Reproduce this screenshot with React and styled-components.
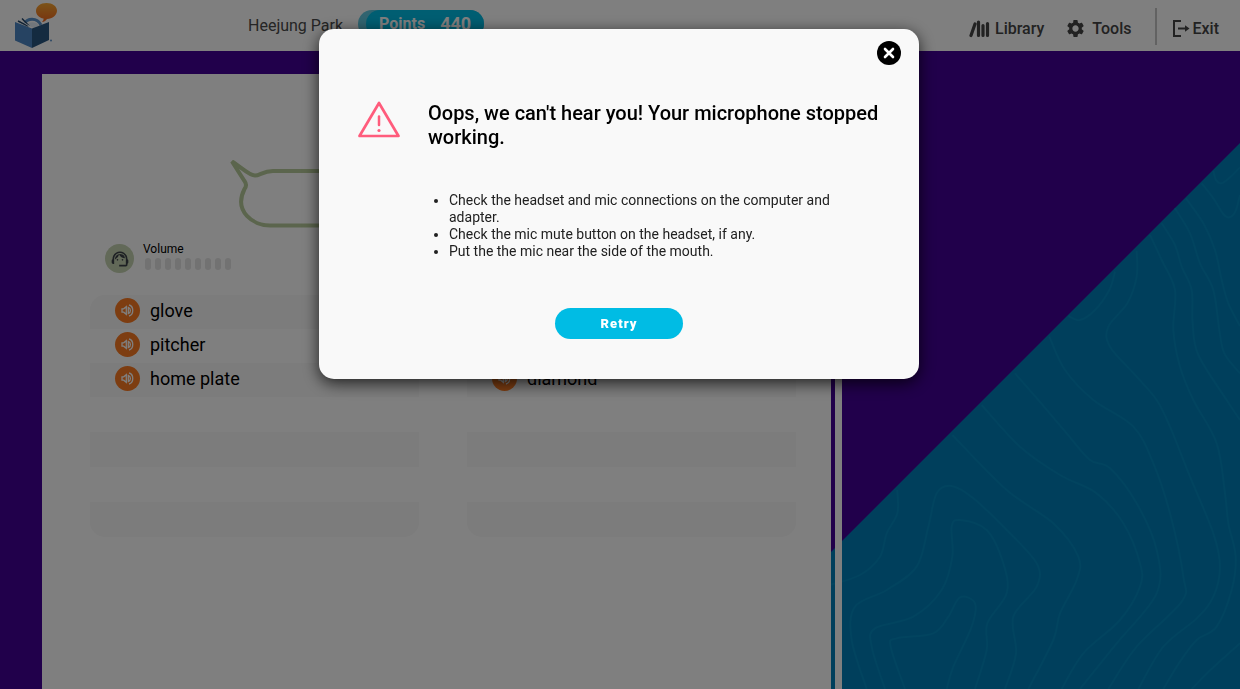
import styled, { createGlobalStyle } from 'styled-components'
import { MdSettings, MdSupportAgent } from 'react-icons/md'

const GlobalStyle = createGlobalStyle`
  * {
    box-sizing: border-box;
  }
  body {
    margin: 0;
    font-family: Roboto, sans-serif;
    background-color: #420096;
  }
`

const Page = styled.div`
  display: flex;
  flex-direction: column;
  min-height: 100vh;
  position: relative;
  overflow: hidden;
`

const Header = styled.header`
  display: flex;
  align-items: center;
  justify-content: space-between;
  height: 51px;
  padding: 0 21px 0 14px;
  background-color: #fff;
  color: #4a4a4a;
`

const HeaderGroup = styled.div`
  display: flex;
  align-items: center;
`

const Logo = styled.svg`
  width: 46px;
  height: 48px;
  margin: 0 188px 2px 0;
`

const UserName = styled.span`
  font-size: 16px;
  margin-right: 15px;
`

const PointsBadge = styled.div`
  height: 28px;
  margin-bottom: 4px;
  padding-left: 8px;
  border-radius: 14px;
  background-color: #63c9e0;
`

const PointsInner = styled.div`
  display: flex;
  align-items: center;
  gap: 15px;
  height: 28px;
  padding: 0 13px;
  border-radius: 14px;
  background-color: #00bce4;
  color: #fff;
  font-size: 16px;
  font-weight: 700;
`

const Score = styled.span`
  font-size: 18px;
`

const NavButton = styled.button`
  display: flex;
  align-items: center;
  gap: ${({ $gap }) => $gap || 5}px;
  padding: 6px 0 0;
  border: none;
  background: none;
  color: #444;
  font-family: inherit;
  font-size: 16px;
  font-weight: 500;
  margin-left: ${({ $space }) => $space || 0}px;
`

const Divider = styled.div`
  width: 2px;
  height: 37px;
  margin: 2px 15px 0 23px;
  background-color: #c4c4c4;
`

const Stage = styled.main`
  flex: 1;
  display: grid;
  grid-template-columns: minmax(0, 1fr) 7px 398px;
  column-gap: 4px;
  padding: 23px 0 0 42px;
  margin-right: -4px;
`

const Backdrop = styled.svg`
  position: absolute;
  right: 0;
  bottom: 0;
  width: 420px;
  height: 559px;
`

const Sheet = styled.section`
  position: relative;
  padding: 86px 35px 40px 48px;
  background-color: #fff;
`

const PageEdge = styled.div`
  position: relative;
  background-color: #fff;
`

const Bubble = styled.svg`
  display: block;
  width: 420px;
  height: 68px;
  margin-left: 140px;
`

const Volume = styled.div`
  display: flex;
  gap: 9px;
  margin: 13px 0 22px 15px;
`

const Avatar = styled.div`
  display: flex;
  align-items: center;
  justify-content: center;
  width: 29px;
  height: 29px;
  margin-top: 3px;
  border-radius: 50%;
  background-color: #c4d2b0;
  color: #3c4248;
`

const VolumeLabel = styled.div`
  font-size: 12px;
  line-height: 16px;
`

const Bars = styled.div`
  display: flex;
  gap: 4px;
  padding: 1px 2px 2px;
`

const Bar = styled.span`
  width: 6px;
  height: 12px;
  border-radius: 3px;
  background-color: #e4e4e4;
`

const Columns = styled.div`
  display: grid;
  grid-template-columns: 1fr 1fr;
  gap: 48px;
`

const WordList = styled.ul`
  margin: 0;
  padding: 0;
  list-style: none;
  border-radius: 15px;
  overflow: hidden;
`

const WordRow = styled.li`
  display: flex;
  align-items: center;
  gap: 10px;
  height: ${({ $tall }) => ($tall ? 35 : 34)}px;
  padding: 0 0 3px 25px;
  font-size: 18px;

  &:nth-child(odd) {
    background-color: #f8f8f8;
  }
`

const SpeakButton = styled.button`
  display: flex;
  align-items: center;
  justify-content: center;
  width: 25px;
  height: 25px;
  padding: 0;
  border: none;
  border-radius: 50%;
  background-color: #fb7b23;
`

const Overlay = styled.div`
  position: fixed;
  inset: 0;
  display: flex;
  justify-content: center;
  align-items: flex-start;
  padding: 29px 2px 0 0;
  background-color: rgba(0, 0, 0, 0.5);
`

const Modal = styled.div`
  display: flex;
  flex-direction: column;
  width: 600px;
  max-width: 100%;
  padding: 12px 18px 40px 39px;
  border-radius: 15px;
  background-color: #f9f9f9;
  box-shadow: 0 4px 16px rgba(0, 0, 0, 0.75);
`

const CloseButton = styled.button`
  align-self: flex-end;
  display: flex;
  width: 24px;
  height: 24px;
  padding: 0;
  border: none;
  background: none;
`

const Message = styled.div`
  display: flex;
  gap: 28px;
  margin-top: 36px;

  & svg {
    flex-shrink: 0;
  }
`

const Title = styled.h2`
  margin: 0;
  font-size: 20px;
  line-height: 24px;
  font-weight: 500;
  color: #000;
`

const Tips = styled.ul`
  margin: 43px 60px 48px 71px;
  padding-left: 20px;
  font-size: 14px;
  line-height: 17px;
  color: #212121;
`

const RetryButton = styled.button`
  align-self: center;
  width: 128px;
  height: 31px;
  margin-right: 21px;
  border: none;
  border-radius: 16px;
  background-color: #00bce4;
  color: #fff;
  font-family: inherit;
  font-size: 13px;
  font-weight: 900;
  letter-spacing: 1px;
`

// contour lines of the map, as points the curve runs through
const contours = [
  [[1180, 122], [1188, 150], [1205, 160], [1230, 142], [1260, 112]],
  [[1145, 160], [1180, 205], [1210, 252], [1228, 262], [1246, 245], [1260, 195]],
  [[1098, 205], [1150, 280], [1185, 360], [1205, 450], [1225, 520], [1260, 588]],
  [[1065, 235], [1110, 310], [1140, 400], [1180, 480], [1198, 600], [1213, 670], [1260, 730]],
  [[1025, 280], [1065, 345], [1085, 410], [1115, 480], [1118, 580], [1135, 675], [1220, 810], [1260, 870]],
  [[990, 315], [1025, 390], [1065, 480], [1060, 600], [1080, 710], [1120, 810], [1190, 940], [1215, 1090], [1225, 1180], [1247, 1280], [1235, 1380], [1190, 1490], [1130, 1530], [1080, 1595], [1030, 1677]],
  [[950, 362], [950, 440], [922, 520], [865, 590], [870, 650], [950, 740], [1010, 810], [1050, 890], [1110, 1040], [1180, 1210], [1200, 1310], [1180, 1400], [1130, 1465], [1030, 1550], [955, 1677]],
  [[885, 425], [868, 480], [825, 540], [780, 570], [745, 558]],
  [[688, 620], [735, 720], [820, 810], [940, 890], [1000, 1000], [1050, 1150], [1090, 1340], [1085, 1415], [950, 1550], [865, 1677]],
  [[585, 730], [655, 810], [740, 910], [810, 990], [870, 1015], [950, 1120], [1010, 1260], [1010, 1390], [890, 1540], [780, 1677]],
  [[485, 825], [600, 950], [720, 1035], [830, 1090], [910, 1180], [960, 1300], [960, 1370], [900, 1470], [790, 1570], [725, 1677]],
  [[397, 915], [560, 1080], [700, 1180], [775, 1280], [770, 1350], [720, 1450], [700, 1530], [625, 1677]],
  [[232, 1080], [232, 1150], [200, 1210], [180, 1280], [120, 1335], [30, 1365]],
  [[140, 1677], [95, 1530], [105, 1430], [200, 1380], [290, 1310], [325, 1190], [350, 1090], [395, 1068], [460, 1105], [560, 1200], [650, 1300], [650, 1370], [580, 1460], [588, 1570], [555, 1677]],
  [[195, 1677], [155, 1550], [165, 1495], [280, 1460], [365, 1380], [397, 1280], [395, 1190], [420, 1170], [500, 1200], [550, 1300], [560, 1390], [502, 1480], [500, 1560], [465, 1677]],
  [[255, 1677], [212, 1550], [230, 1525], [340, 1510], [385, 1460], [420, 1402], [465, 1420], [455, 1490], [400, 1610], [380, 1677]],
  [[1115, 1677], [1180, 1612], [1260, 1540]],
]

function smoothPath(points) {
  let d = `M${points[0][0]} ${points[0][1]}`
  for (let i = 0; i < points.length - 1; i++) {
    const before = points[i - 1] || points[i]
    const from = points[i]
    const to = points[i + 1]
    const after = points[i + 2] || to
    const c1 = [from[0] + (to[0] - before[0]) / 6, from[1] + (to[1] - before[1]) / 6]
    const c2 = [to[0] - (after[0] - from[0]) / 6, to[1] - (after[1] - from[1]) / 6]
    d += ` C${c1} ${c2} ${to}`
  }
  return d
}

const columns = [
  ['glove', 'pitcher', 'home plate', '', '', '', ''],
  ['', '', 'diamond', '', '', '', ''],
]

function BookLogo() {
  return (
    <Logo viewBox="0 0 46 48" aria-label="Home" role="img">
      <defs>
        <linearGradient id="balloon" x1="0" y1="0" x2="0" y2="1">
          <stop offset="0" stopColor="#f8a832" />
          <stop offset="1" stopColor="#f0661e" />
        </linearGradient>
      </defs>
      <path d="M10 23c3-6 13-7 17 1" fill="none" stroke="#5b92cb" strokeWidth="3" />
      <path d="M13 24c3-4 9-3 12 0l-5 3z" fill="#e2edf7" />
      <path d="M1 21l17 6.500v19.500l-17-7.500z" fill="#4c86c4" />
      <path d="M18 27.500l17-6.500v18l-17 8z" fill="#285680" />
      <path d="M4 20l10 5M8 17.500l7 7.500" stroke="#27486b" strokeWidth="1.500" />
      <path d="M6 19l9 6" stroke="#fff" strokeWidth="1" />
      <path d="M32.500 2c6 0 10.500 3.300 10.500 7.700s-4.500 8-10 8.300c-1 1.500-2.500 3-5 3 1.300-1.200 1.700-2.500 1.500-3.500-4.500-1-7.500-4-7.500-7.600 0-4.500 4.500-7.900 10.500-7.900z" fill="url(#balloon)" />
      <circle cx="37" cy="39.500" r="1" fill="#5b92cb" />
    </Logo>
  )
}

function LibraryIcon() {
  return (
    <svg width="21" height="18" viewBox="0 0 21 18" fill="none" stroke="currentColor" strokeWidth="3.200" strokeLinecap="round">
      <path d="M2 15.500L6 4M9.500 2v13.500M14 5.500v10M18.500 3.500v12" />
    </svg>
  )
}

function ExitIcon() {
  return (
    <svg width="18" height="20" viewBox="0 0 18 20" fill="none" stroke="currentColor" strokeWidth="2">
      <path d="M9 2H2v15h7" />
      <path d="M6 9.500h8" />
      <path d="M13 6.200l4.500 3.300-4.500 3.300z" fill="currentColor" stroke="none" />
    </svg>
  )
}

function SpeakerIcon() {
  return (
    <svg width="13" height="13" viewBox="0 0 13 13" fill="none" stroke="#fff" strokeWidth="1.300">
      <path d="M1 4.800h1.700L5.300 2.700v7.600L2.700 8.200H1z" />
      <path d="M7.300 3.400c2.800 1 2.800 5.200 0 6.200z" />
      <path d="M8 1c5 1.300 5 9.700 0 11" />
    </svg>
  )
}

function WarningIcon() {
  return (
    <svg width="42" height="38" viewBox="0 0 42 38" fill="none" stroke="#ff5c7c" strokeLinejoin="round" strokeLinecap="round">
      <path d="M21 2L1.500 35h39z" strokeWidth="2.700" />
      <path d="M21 15.500v8.500" strokeWidth="2.500" />
      <circle cx="21" cy="29.500" r="1.600" fill="#ff5c7c" stroke="none" />
    </svg>
  )
}

export default function App() {
  return (
    <Page>
      <GlobalStyle />
      <Backdrop viewBox="0 0 1260 1677" aria-hidden="true">
        <path d="M1260 39L0 1299v378h1260z" fill="#007eb9" />
        <g fill="none" stroke="#0488bf" strokeWidth="6">
          {contours.map((points, i) => (
            <path key={i} d={smoothPath(points)} />
          ))}
        </g>
      </Backdrop>

      <Header>
        <HeaderGroup>
          <BookLogo />
          <UserName>Heejung Park</UserName>
          <PointsBadge>
            <PointsInner>
              <span>Points</span>
              <Score>440</Score>
            </PointsInner>
          </PointsBadge>
        </HeaderGroup>
        <HeaderGroup>
          <NavButton>
            <LibraryIcon />
            Library
          </NavButton>
          <NavButton $space={21} $gap={6}>
            <MdSettings size={21} />
            Tools
          </NavButton>
          <Divider />
          <NavButton $gap={3}>
            <ExitIcon />
            Exit
          </NavButton>
        </HeaderGroup>
      </Header>

      <Stage>
        <Sheet>
          <Bubble viewBox="0 0 420 68" aria-hidden="true">
            <path
              d="M2 1.500L14.500 21Q17.500 25 14.500 29C3 52 24 65.500 40 65.500H385C422 65 422 11 385 11H43C33 11 30 15.500 25 15.500C19 15.500 10 6 2 1.500z"
              fill="none"
              stroke="#b7cb9a"
              strokeWidth="4"
            />
          </Bubble>
          <Volume>
            <Avatar>
              <MdSupportAgent size={20} />
            </Avatar>
            <div>
              <VolumeLabel>Volume</VolumeLabel>
              <Bars>
                {Array.from({ length: 9 }, (_, i) => (
                  <Bar key={i} />
                ))}
              </Bars>
            </div>
          </Volume>
          <Columns>
            {columns.map((words, c) => (
              <WordList key={c}>
                {words.map((word, i) => (
                  <WordRow key={i} $tall={i > 2}>
                    {word && (
                      <>
                        <SpeakButton aria-label={`Play ${word}`}>
                          <SpeakerIcon />
                        </SpeakButton>
                        {word}
                      </>
                    )}
                  </WordRow>
                ))}
              </WordList>
            ))}
          </Columns>
        </Sheet>
        <PageEdge />
      </Stage>

      <Overlay>
        <Modal role="dialog" aria-labelledby="mic-title">
          <CloseButton aria-label="Close">
            <svg width="24" height="24" viewBox="0 0 24 24">
              <circle cx="12" cy="12" r="12" fill="#000" />
              <path d="M8 8l8 8M16 8l-8 8" stroke="#fff" strokeWidth="2.600" strokeLinecap="round" />
            </svg>
          </CloseButton>
          <Message>
            <WarningIcon />
            <Title id="mic-title">Oops, we can't hear you! Your microphone stopped working.</Title>
          </Message>
          <Tips>
            <li>Check the headset and mic connections on the computer and adapter.</li>
            <li>Check the mic mute button on the headset, if any.</li>
            <li>Put the the mic near the side of the mouth.</li>
          </Tips>
          <RetryButton>Retry</RetryButton>
        </Modal>
      </Overlay>
    </Page>
  )
}
